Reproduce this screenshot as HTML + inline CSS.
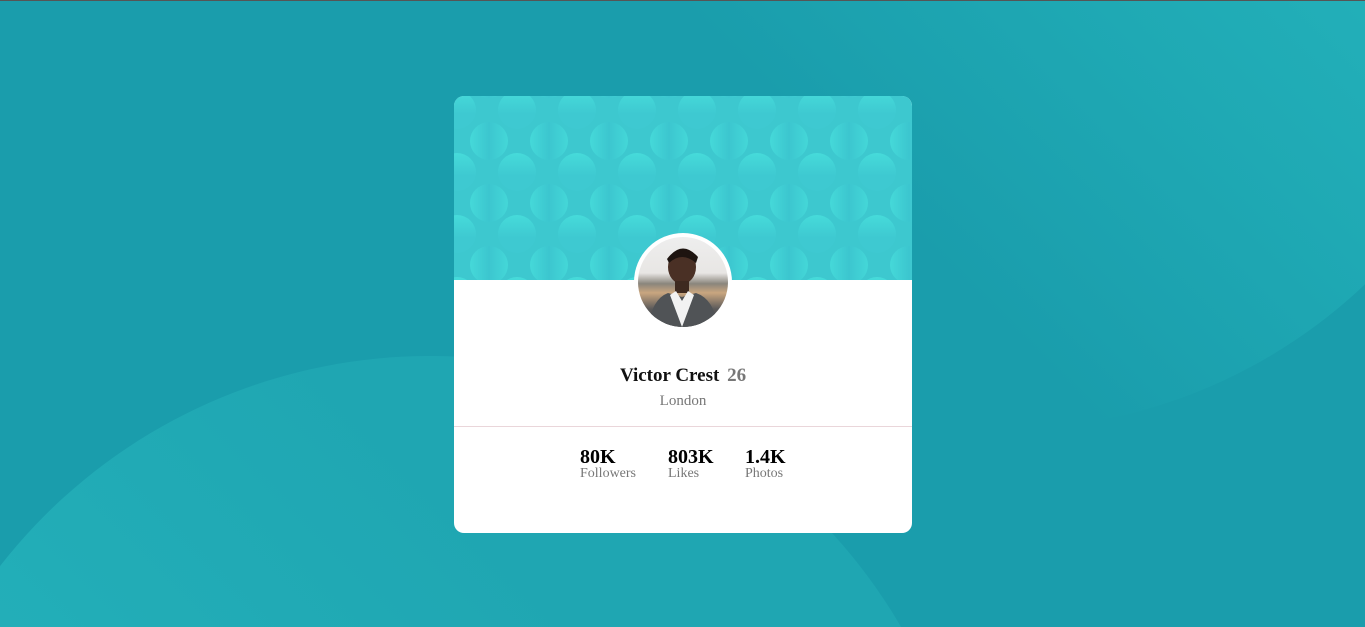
<!DOCTYPE html>
<html><head><style>
html,body{margin:0;padding:0;width:1365px;height:627px;overflow:hidden;}
body{background:#1a9dac;position:relative;font-family:"Liberation Serif",serif;}
.bgw{position:absolute;left:0;top:0;width:1365px;height:627px;overflow:hidden;}
.top{position:absolute;left:0;top:0;width:1365px;height:1px;background:#555;z-index:5;}
.c1{position:absolute;left:-115px;top:356px;width:1090px;height:1090px;border-radius:50%;background:linear-gradient(45deg,#2cbdc3 0%,#24b1ba 35%,#1fa6b2 70%);}
.c2{position:absolute;left:470px;top:-630px;width:1060px;height:1060px;border-radius:50%;background:linear-gradient(225deg,#27b8bf 20%,#1fa9b4 50%,#1a9dac 70%);}
.card{position:absolute;left:454px;top:96px;width:458px;height:437px;background:#fff;border-radius:10px;overflow:hidden;}
.hdr{position:absolute;left:0;top:0;width:458px;height:184px;}
.av{position:absolute;left:180px;top:137px;width:98px;height:98px;border-radius:50%;background:#fff;}
.av .in{position:absolute;left:4px;top:4px;width:90px;height:90px;border-radius:50%;overflow:hidden;background:linear-gradient(#eeeeee 0%,#e8e6e4 40%,#8a857c 52%,#c9a67f 62%,#5b5a5a 80%,#3e3e3e 100%);}
.name{position:absolute;left:0;width:458px;top:269px;text-align:center;font-size:19px;font-weight:bold;color:#111;}
.name span{color:#777;margin-left:3px;}
.loc{position:absolute;left:0;width:458px;top:297px;text-align:center;font-size:15px;color:#777;}
.hr{position:absolute;left:0;top:330px;width:458px;height:1px;background:#ead6da;}
.st{position:absolute;top:350px;}
.st b{display:block;font-size:20px;color:#000;line-height:22px;}
.st i{display:block;font-style:normal;font-size:14px;color:#777;line-height:12px;}
</style></head><body>
<div class="bgw"><div class="c1"></div><div class="c2"></div></div>
<div class="top"></div>
<div class="card">
<svg class="hdr" width="458" height="184" viewBox="0 0 458 184">
<defs>
<linearGradient id="g" x1="0" y1="0" x2="1" y2="0"><stop offset="0" stop-color="#45d9d9"/><stop offset="0.5" stop-color="#3cc6cf"/><stop offset="1" stop-color="#44d7d8"/></linearGradient>
<linearGradient id="h" x1="0" y1="0" x2="0" y2="1"><stop offset="0" stop-color="#46dbda"/><stop offset="0.6" stop-color="#3ec9d1"/><stop offset="1" stop-color="#3ec9d1"/></linearGradient>
<pattern id="p" x="3" y="14" width="60" height="62" patternUnits="userSpaceOnUse">
<circle cx="0" cy="0" r="19" fill="url(#h)"/><circle cx="60" cy="0" r="19" fill="url(#h)"/>
<circle cx="0" cy="62" r="19" fill="url(#h)"/><circle cx="60" cy="62" r="19" fill="url(#h)"/>
<circle cx="32" cy="31" r="19" fill="url(#g)"/>
</pattern></defs>
<rect width="458" height="184" fill="#3dc8cf"/>
<rect width="458" height="184" fill="url(#p)"/>
</svg>
<div class="av"><div class="in">
<svg width="90" height="90" viewBox="0 0 90 90"><ellipse cx="44" cy="30" rx="14" ry="17" fill="#4a3025"/><path d="M29 22 Q44 2 60 20 L58 26 Q44 14 31 26Z" fill="#1e1410"/><rect x="37" y="44" width="14" height="12" fill="#3e2a20"/><path d="M10 90 Q14 62 30 56 L44 60 L58 56 Q76 62 80 90Z" fill="#505356"/><path d="M32 58 L44 90 L56 58 L50 54 L44 64 L38 54Z" fill="#f2f2f2"/></svg>
</div></div>
<div class="name">Victor Crest <span>26</span></div>
<div class="loc">London</div>
<div class="hr"></div>
<div class="st" style="left:126px"><b>80K</b><i>Followers</i></div>
<div class="st" style="left:214px"><b>803K</b><i>Likes</i></div>
<div class="st" style="left:291px"><b>1.4K</b><i>Photos</i></div>
</div>
</body></html>
